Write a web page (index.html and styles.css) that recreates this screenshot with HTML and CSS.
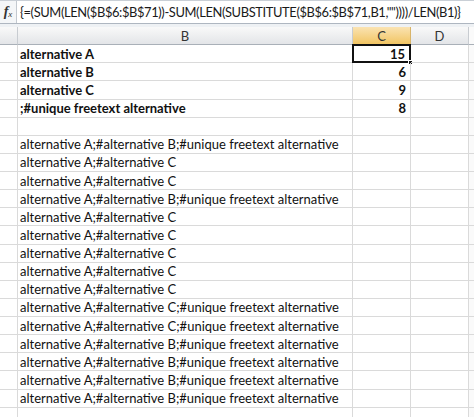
FILE: index.html
```html
<!DOCTYPE html>
<html>
<head>
<meta charset="utf-8">
<link rel="stylesheet" href="styles.css">
</head>
<body>
<div class="sheet">
  <div class="fbar">
    <div class="fx"><span class="f">f</span><span class="x">x</span></div>
    <div class="ftext">{=(SUM(LEN($B$6:$B$71))-SUM(LEN(SUBSTITUTE($B$6:$B$71,B1,""))))/LEN(B1)}</div>
  </div>
  <div class="band"></div>
  <div class="grid">
    <div class="hd"></div><div class="hd">B</div><div class="hd sel">C</div><div class="hd">D</div><div class="hd last"></div>

    <div class="c"></div><div class="c b">alternative A</div><div class="c n active">15<span class="handle"></span></div><div class="c"></div><div class="c last"></div>
    <div class="c"></div><div class="c b">alternative B</div><div class="c n">6</div><div class="c"></div><div class="c last"></div>
    <div class="c"></div><div class="c b">alternative C</div><div class="c n">9</div><div class="c"></div><div class="c last"></div>
    <div class="c"></div><div class="c b">;#unique freetext alternative</div><div class="c n">8</div><div class="c"></div><div class="c last"></div>
    <div class="c"></div><div class="c"></div><div class="c"></div><div class="c"></div><div class="c last"></div>

    <div class="c"></div><div class="c">alternative A;#alternative B;#unique freetext alternative</div><div class="c"></div><div class="c"></div><div class="c last"></div>
    <div class="c"></div><div class="c">alternative A;#alternative C</div><div class="c"></div><div class="c"></div><div class="c last"></div>
    <div class="c"></div><div class="c">alternative A;#alternative C</div><div class="c"></div><div class="c"></div><div class="c last"></div>
    <div class="c"></div><div class="c">alternative A;#alternative B;#unique freetext alternative</div><div class="c"></div><div class="c"></div><div class="c last"></div>
    <div class="c"></div><div class="c">alternative A;#alternative C</div><div class="c"></div><div class="c"></div><div class="c last"></div>
    <div class="c"></div><div class="c">alternative A;#alternative C</div><div class="c"></div><div class="c"></div><div class="c last"></div>
    <div class="c"></div><div class="c">alternative A;#alternative C</div><div class="c"></div><div class="c"></div><div class="c last"></div>
    <div class="c"></div><div class="c">alternative A;#alternative C</div><div class="c"></div><div class="c"></div><div class="c last"></div>
    <div class="c"></div><div class="c">alternative A;#alternative C</div><div class="c"></div><div class="c"></div><div class="c last"></div>
    <div class="c"></div><div class="c">alternative A;#alternative C;#unique freetext alternative</div><div class="c"></div><div class="c"></div><div class="c last"></div>
    <div class="c"></div><div class="c">alternative A;#alternative C;#unique freetext alternative</div><div class="c"></div><div class="c"></div><div class="c last"></div>
    <div class="c"></div><div class="c">alternative A;#alternative B;#unique freetext alternative</div><div class="c"></div><div class="c"></div><div class="c last"></div>
    <div class="c"></div><div class="c">alternative A;#alternative B;#unique freetext alternative</div><div class="c"></div><div class="c"></div><div class="c last"></div>
    <div class="c"></div><div class="c">alternative A;#alternative B;#unique freetext alternative</div><div class="c"></div><div class="c"></div><div class="c last"></div>
    <div class="c"></div><div class="c">alternative A;#alternative B;#unique freetext alternative</div><div class="c"></div><div class="c"></div><div class="c last"></div>
    <div class="c"></div><div class="c"></div><div class="c"></div><div class="c"></div><div class="c last"></div>
  </div>
</div>
</body>
</html>
```
FILE: styles.css
```css
* { box-sizing: border-box; }
html, body { margin: 0; padding: 0; }
body {
  width: 474px;
  height: 417px;
  overflow: hidden;
  background: #fff;
  font-family: Lato, "Open Sans", sans-serif;
  color: #111;
}
.sheet { width: 474px; }
.fbar {
  display: flex;
  height: 24px;
  border-top: 1px solid #c9cfd6;
  border-bottom: 1px solid #aeb6c0;
  background: #fff;
}
.fx {
  flex: 0 0 17px;
  display: flex;
  align-items: center;
  justify-content: center;
  border-right: 1px solid #c3c9d0;
  background: #f4f6f8;
  font-family: "Liberation Serif", serif;
  font-style: italic;
  color: #333;
}
.fx .f { font-size: 14px; font-weight: bold; }
.fx .x { font-size: 9px; margin-top: 4px; }
.ftext {
  flex: 1 1 auto;
  min-width: 0;
  padding-left: 3px;
  display: flex;
  align-items: center;
  font-size: 12.9px;
  letter-spacing: -0.38px;
  white-space: nowrap;
  overflow: hidden;
  color: #1a1a1a;
}
.band { height: 3px; background: #eef1f4; }
.grid {
  display: grid;
  grid-template-columns: 18px 335px 58px 58px 5px;
  grid-auto-rows: 18.13px;
}
.hd {
  background: linear-gradient(#f9f9f9, #e3e5e8);
  border-right: 1px solid #c8ccd1;
  border-bottom: 1px solid #a9b0b8;
  display: flex;
  align-items: center;
  justify-content: center;
  font-size: 13px;
  color: #333;
}
.hd.sel {
  background: linear-gradient(#fae3b2, #f2c563);
  border-bottom-color: #c2923a;
  border-right-color: #d8b46a;
}
.hd.last, .c.last { border-right: none; background: #fafafa; }
.c {
  border-right: 1px solid #dadada;
  border-bottom: 1px solid #dadada;
  display: flex;
  align-items: center;
  padding: 0 2px;
  font-size: 13px;
  white-space: nowrap;
  position: relative;
}
.c.b { font-weight: bold; }
.c.n { font-weight: bold; justify-content: flex-end; padding-right: 4px; }
.c.active {
  border: 2px solid #111;
  margin: -1px 0 0 -1px;
}
.handle {
  position: absolute;
  right: -4px;
  bottom: -4px;
  width: 5px;
  height: 5px;
  background: #111;
  border: 1px solid #fff;
}
```
